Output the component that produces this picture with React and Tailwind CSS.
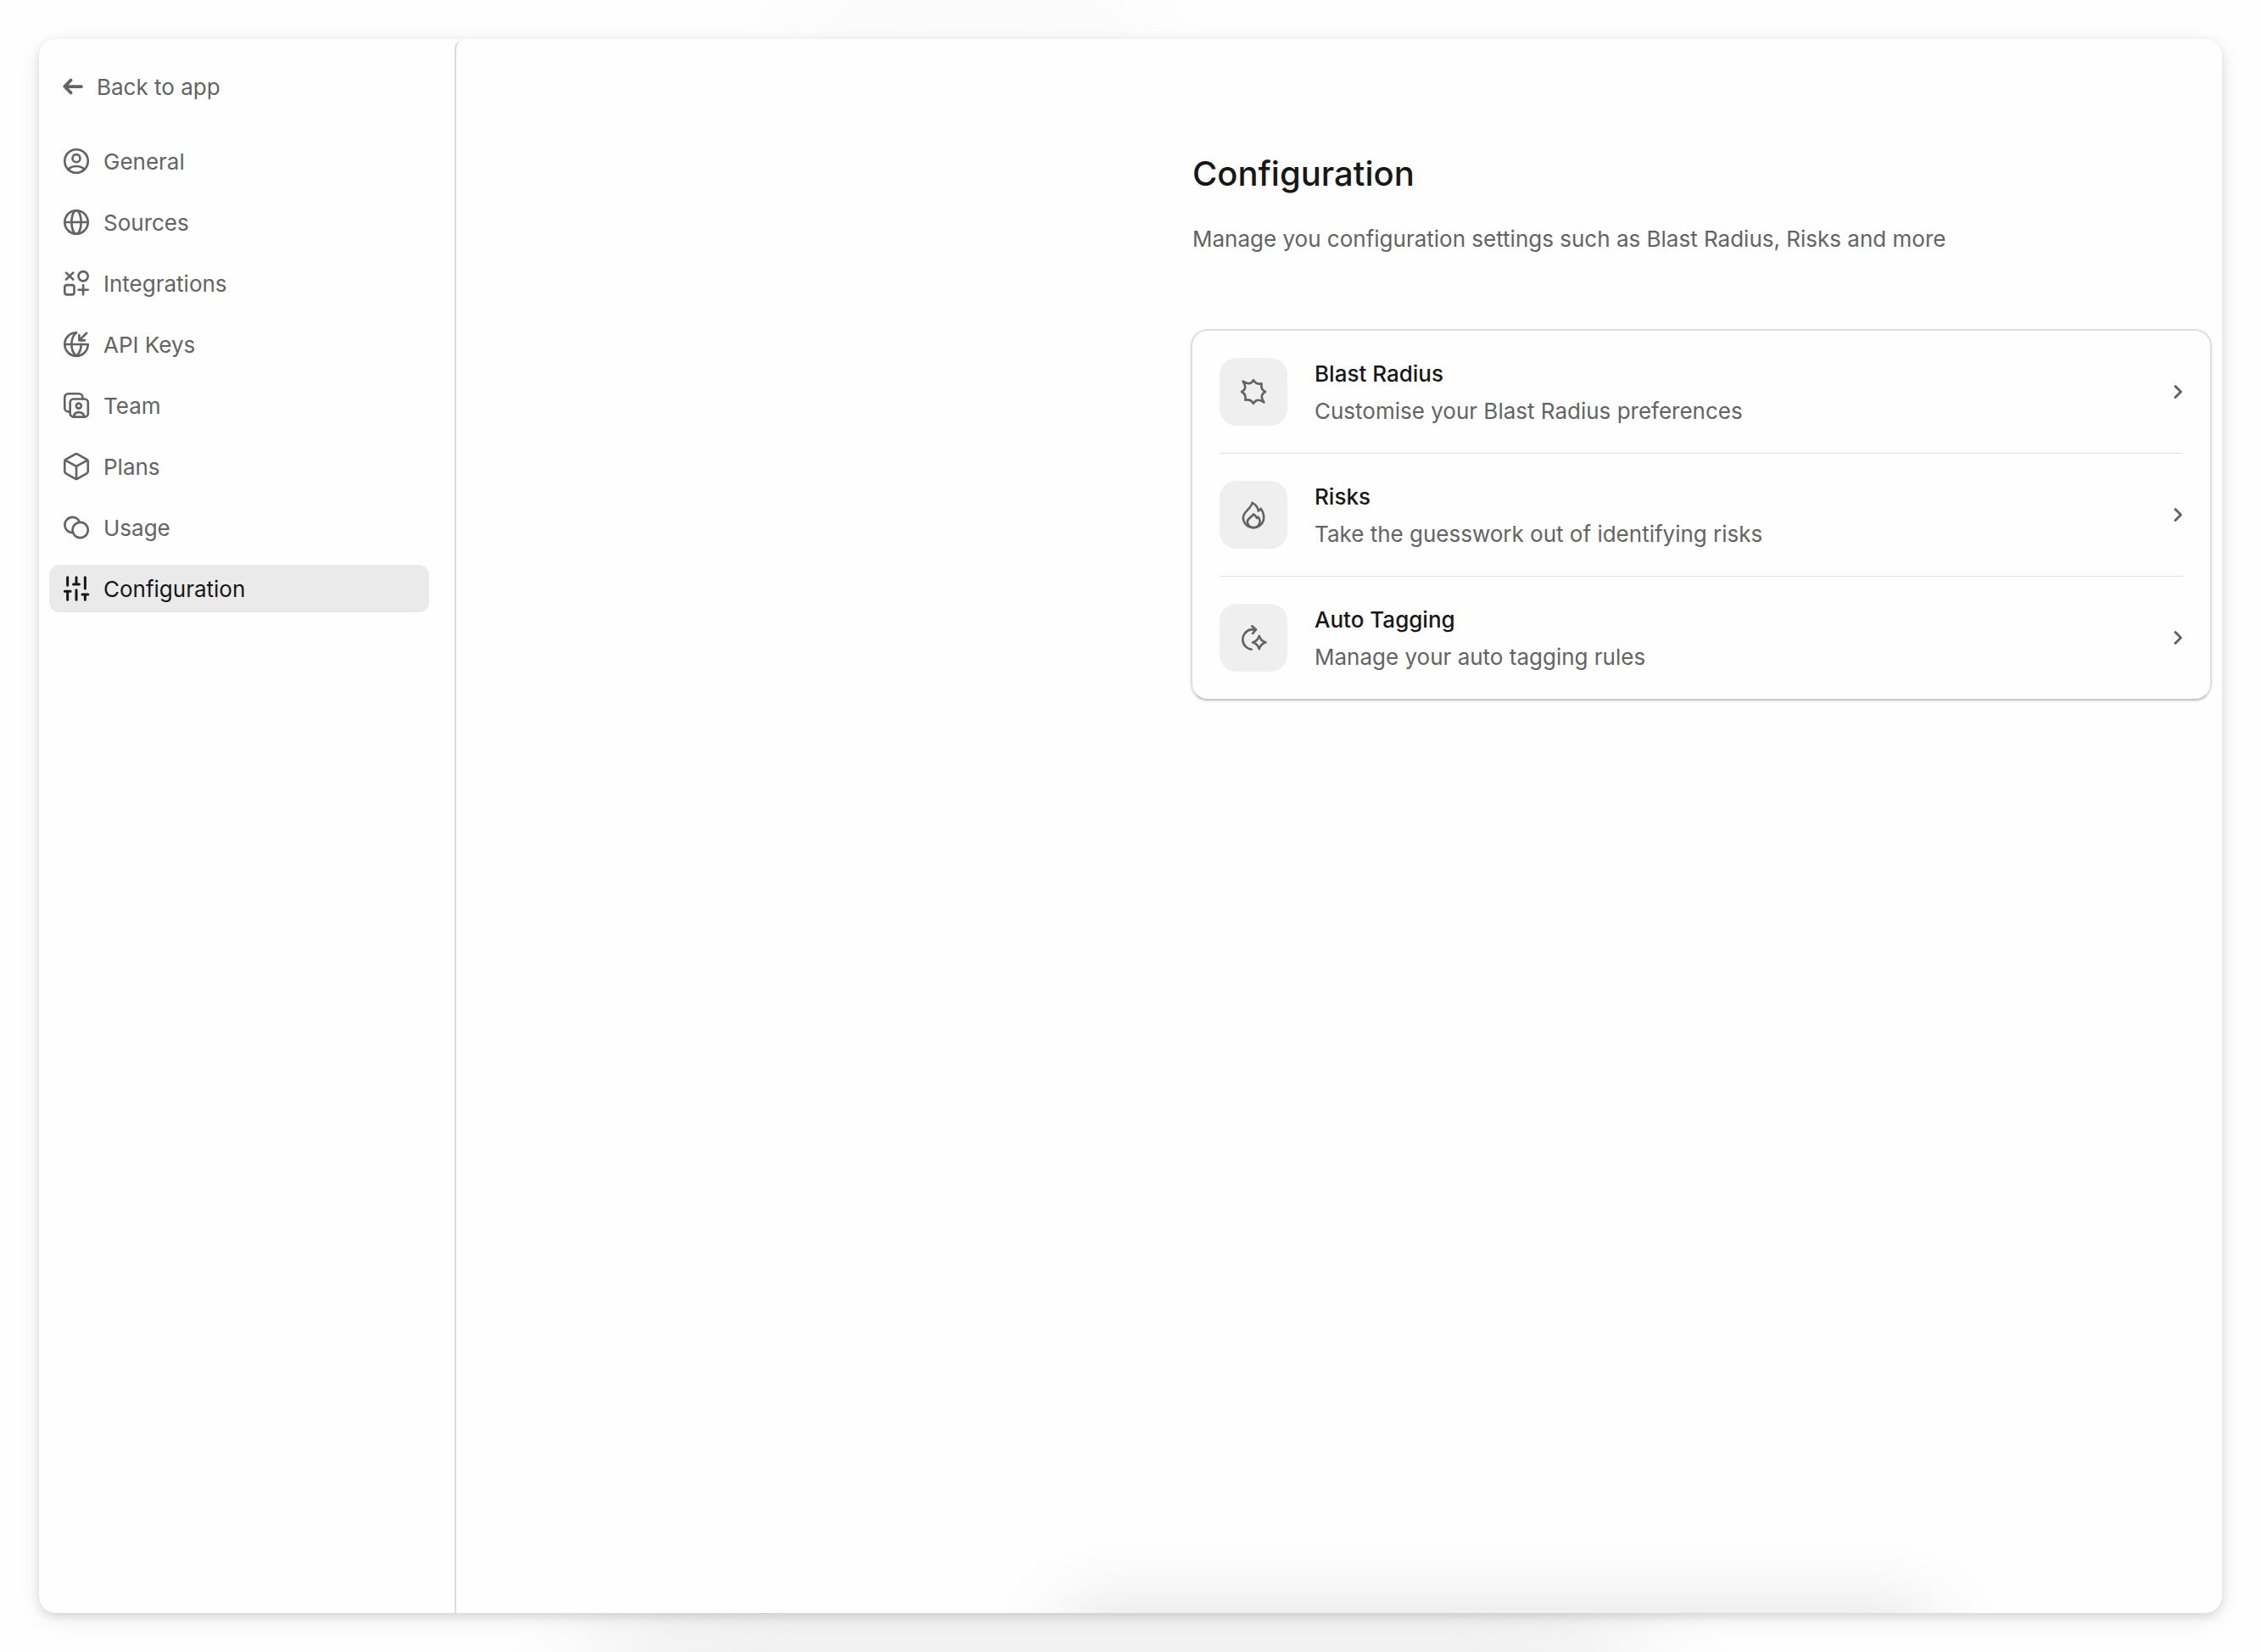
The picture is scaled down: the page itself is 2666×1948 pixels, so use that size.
import React, { useState } from "react";

const Icon = ({ children, className = "size-9", strokeWidth = 1.75 }) => (
  <svg
    viewBox="0 0 24 24"
    fill="none"
    stroke="currentColor"
    strokeWidth={strokeWidth}
    strokeLinecap="round"
    strokeLinejoin="round"
    className={`shrink-0 ${className}`}
    aria-hidden="true"
  >
    {children}
  </svg>
);

const GeneralIcon = () => (
  <Icon>
    <circle cx="12" cy="12" r="9.15" />
    <circle cx="12" cy="9.75" r="3" />
    <path d="M5.6 18.5C7.2 16.9 9.4 16 12 16s4.8.9 6.4 2.5" />
  </Icon>
);

const SourcesIcon = () => (
  <Icon>
    <circle cx="12" cy="12" r="9.15" />
    <ellipse cx="12" cy="12" rx="3.75" ry="9.15" />
    <path d="M2.85 12h18.3" />
  </Icon>
);

const IntegrationsIcon = () => (
  <Icon>
    <path d="m4 3.75 5.5 5.25M9.5 3.75 4 9" />
    <circle cx="17.4" cy="6.5" r="3.75" />
    <rect x="2.85" y="13.4" width="7.5" height="7.5" rx="1.75" />
    <path d="M17.4 13.5v7.4M13.7 17.2h7.4" />
  </Icon>
);

const ApiKeysIcon = () => (
  <Icon>
    <path d="M12 2.85A9.15 9.15 0 1 0 21.15 12H2.85" />
    <path d="M12 2.85C9.8 4.6 8.25 7.8 8.25 12s1.55 7.4 3.75 9.15c2.2-1.75 3.75-4.95 3.75-9.15" />
    <path d="m20.1 3.2-5.85 5.7M14.25 4.7v4.2h4.4" />
  </Icon>
);

const TeamIcon = () => (
  <Icon>
    <rect x="7.1" y="7" width="14.1" height="14.1" rx="2.75" />
    <path d="M7 16.9H5.6a2.75 2.75 0 0 1-2.75-2.75V5.6A2.75 2.75 0 0 1 5.6 2.85h8.55A2.75 2.75 0 0 1 16.9 5.6V7" />
    <circle cx="13.9" cy="12.4" r="2" />
    <path d="M9.7 21c.5-2 2.2-3.6 4.3-3.6s3.8 1.6 4.3 3.6" />
  </Icon>
);

const PlansIcon = () => (
  <Icon>
    <path d="m13 2.4 7.1 4a2 2 0 0 1 1.05 1.75v7.7a2 2 0 0 1-1.05 1.75L13 21.6a2 2 0 0 1-2 0l-7.1-4a2 2 0 0 1-1.05-1.75v-7.7A2 2 0 0 1 3.9 6.4l7.1-4a2 2 0 0 1 2 0Z" />
    <path d="M3.2 7.1 12 11.9l8.8-4.8M12 11.9v9.8" />
  </Icon>
);

const UsageIcon = () => (
  <Icon>
    <circle cx="15.1" cy="14" r="6.1" />
    <path d="M14.73 7.91A6.1 6.1 0 1 0 9.37 16.09" />
  </Icon>
);

const ConfigurationIcon = () => (
  <Icon strokeWidth={2}>
    <path d="M5.1 3.2v6.3M2.9 14.2h4.5M5.1 14.2v6.6" />
    <path d="M12 3.2v5.5M9.7 8.7h4.6M12 13.2v7.6" />
    <path d="M18.9 3.2V12M16.7 16.6h4.5M18.9 16.6v4.2" />
  </Icon>
);

const BlastIcon = () => (
  <Icon>
    <path d="M12 2.7C13.6 5.6 15.6 6.2 18.4 5.6 17.8 8.4 18.4 10.4 21.3 12 18 13.8 17.6 16 20.3 20.3 16 17.6 13.8 18 12 21.3 10.4 18.4 8.4 17.8 5.6 18.4 6.2 15.6 5.6 13.6 2.7 12 6 10.2 6.4 8 3.7 3.7 8 6.4 10.2 6 12 2.7Z" />
  </Icon>
);

const RisksIcon = () => (
  <Icon>
    <path d="M11 2.6c3 1.4 4.4 3.4 4.8 6.4.8-.3 1.5-.9 1.9-1.8 1.6 1.9 2.4 4.2 2.4 6.8a8.1 8.1 0 0 1-16.2.2C3.9 9.5 10 7.5 11 2.6Z" />
    <path d="M12 11.6c1.5.9 2.3 1.8 2.6 3 .6-.2.9-.4 1.2-.8.8 1 1.2 2.2 1.2 3.6 0 2.6-2.1 4.7-4.9 4.7s-4.9-2.1-4.9-4.7c0-2.7 3.8-3.6 4.8-5.8Z" />
  </Icon>
);

const TaggingIcon = () => (
  <Icon>
    <path d="M10.4 21.2A7.9 7.9 0 0 1 10 5.6h3.8M10.9 2.9l3.1 2.7-2.6 3" />
    <path d="M16.5 10.6c.9 3 2.1 4.2 5.1 5.1-3 .9-4.2 2.1-5.1 5.1-.9-3-2.1-4.2-5.1-5.1 3-.9 4.2-2.1 5.1-5.1Z" />
  </Icon>
);

const Chevron = () => (
  <svg
    viewBox="0 0 12 24"
    fill="none"
    stroke="currentColor"
    strokeWidth="3"
    strokeLinecap="round"
    strokeLinejoin="round"
    className="h-6 w-3 shrink-0"
    aria-hidden="true"
  >
    <path d="M3 5.5 9.5 12 3 18.5" />
  </svg>
);

const navItems = [
  { name: "General", icon: GeneralIcon },
  { name: "Sources", icon: SourcesIcon },
  { name: "Integrations", icon: IntegrationsIcon },
  { name: "API Keys", icon: ApiKeysIcon },
  { name: "Team", icon: TeamIcon },
  { name: "Plans", icon: PlansIcon },
  { name: "Usage", icon: UsageIcon },
  { name: "Configuration", icon: ConfigurationIcon },
];

const settings = [
  {
    title: "Blast Radius",
    description: "Customise your Blast Radius preferences",
    icon: BlastIcon,
  },
  {
    title: "Risks",
    description: "Take the guesswork out of identifying risks",
    icon: RisksIcon,
  },
  {
    title: "Auto Tagging",
    description: "Manage your auto tagging rules",
    icon: TaggingIcon,
  },
];

const Sidebar = () => {
  const [active, setActive] = useState("Configuration");

  return (
    <aside className="w-[490px] shrink-0 pl-3 pr-[30px] pt-7">
      <a href="#app" className="flex h-14 items-center gap-4 px-4">
        <Icon className="size-6" strokeWidth={3.75}>
          <path d="M2.5 12H22M9.5 4.6 2.2 12l7.300 7.400" />
        </Icon>
        <span className="pt-0.5">Back to app</span>
      </a>

      <nav className="mt-8 flex flex-col gap-4">
        {navItems.map(({ name, icon: ItemIcon }) => (
          <a
            key={name}
            href="#settings"
            onClick={() => setActive(name)}
            className={`flex h-14 items-center gap-3.5 rounded-xl px-3.5 ${
              active === name ? "bg-[#eaeaea] text-[#171717]" : ""
            }`}
          >
            <ItemIcon />
            <span className="pt-0.5">{name}</span>
          </a>
        ))}
      </nav>
    </aside>
  );
};

const App = () => {
  return (
    <div className="relative flex min-h-screen overflow-hidden bg-[#fefefe] p-[46px] font-['Inter',sans-serif] text-[26px] leading-[44px] text-[#636363]">
      {/* soft grey glows behind the panel */}
      <div className="absolute -bottom-48 left-[26%] h-72 w-[47%] rounded-full bg-[#f1f1f1] blur-[60px]" />
      <div className="absolute -top-10 left-[35%] h-40 w-[16%] rounded-full bg-[#fbfbfb] blur-[40px]" />

      <div className="relative flex flex-1 overflow-hidden rounded-[20px] bg-[#fefefe] shadow-[0_8px_32px_rgba(0,0,0,0.06),0_4px_12px_rgba(0,0,0,0.13)]">
        <Sidebar />

        <main className="relative flex-1 overflow-hidden rounded-tl-xl border-l-2 border-[#dcdcdc]">
          <div className="ml-auto mr-3 max-w-[1204px] pt-32">
            <div className="px-0.5">
              <h1 className="text-[40px] font-medium leading-[62px] text-[#171717]">
                Configuration
              </h1>
              <p className="mt-6">
                Manage you configuration settings such as Blast Radius, Risks and more
              </p>
            </div>

            <ul className="mt-21 rounded-[20px] border-2 border-[#dfdfdf] border-b-[#c8c8c8] px-8 shadow-sm">
              {settings.map(({ title, description, icon: ItemIcon }) => (
                <li key={title} className="border-b border-[#e2e2e2] last:border-b-0">
                  <a href="#setting" className="flex h-36 items-center gap-8">
                    <span className="flex size-20 items-center justify-center rounded-[20px] bg-[#efefef]">
                      <ItemIcon />
                    </span>
                    <span className="flex flex-1 flex-col pt-0.5">
                      <span className="font-medium text-[#171717]">{title}</span>
                      <span>{description}</span>
                    </span>
                    <Chevron />
                  </a>
                </li>
              ))}
            </ul>
          </div>

          <div className="absolute -bottom-20 left-[34%] right-[16%] h-20 rounded-[40px] shadow-[0_0_96px_rgba(0,0,0,0.13)]" />
        </main>
      </div>
    </div>
  );
};

export default App;
